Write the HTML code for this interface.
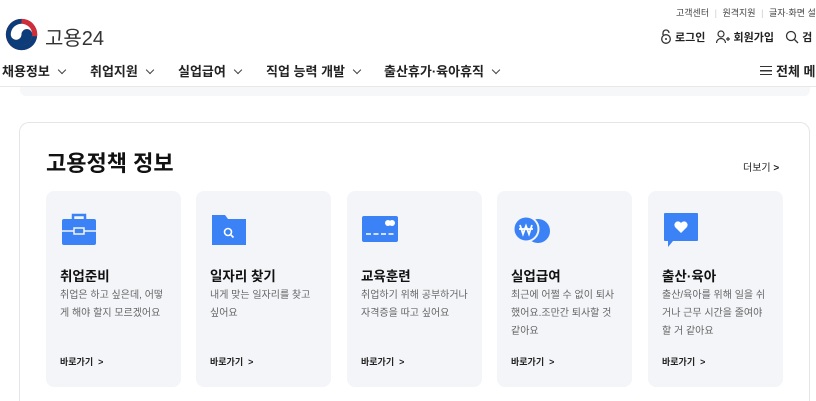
<!DOCTYPE html>
<html><head><meta charset="utf-8"><style>
*{margin:0;padding:0;box-sizing:border-box}
html,body{width:816px;height:401px;overflow:hidden}
body{background:#fff;font-family:"Liberation Sans","Noto Sans CJK KR",sans-serif;color:#222;position:relative}
.a{position:absolute;white-space:nowrap}
.top{font-size:9px;color:#444;top:6px}
.nav{top:61px;font-size:13px;font-weight:700;color:#222}
.chev{display:inline-block;width:6px;height:6px;border-right:1.4px solid #444;border-bottom:1.4px solid #444;transform:rotate(45deg);margin-left:9px;position:relative;top:-3px}
.box{position:absolute;left:19px;top:122px;width:791px;height:279px;border:1px solid #e3e5e8;border-bottom:none;border-radius:10px 10px 0 0}
.card{position:absolute;top:191px;width:135px;height:196px;background:#f3f5f8;border-radius:8px}
.card .ic{position:absolute;left:15px;top:20px}
.card h3{position:absolute;left:14px;top:74px;font-size:13.5px;font-weight:700;color:#111}
.card p{position:absolute;left:14px;top:96px;font-size:10px;line-height:18px;color:#666;width:112px;white-space:normal}
.card .go{position:absolute;left:14px;top:164px;font-size:9px;font-weight:700;color:#222}
</style></head><body>
<svg class="a" style="left:5px;top:18px" width="33" height="33" viewBox="0 0 40 40">
<circle cx="20" cy="20" r="19" fill="#cd2e3a"/>
<path d="M20 1A19 19 0 1 0 39 22L33 22A13 13 0 1 1 20 7Z" fill="#0b3d7a"/>
<path d="M20 7A13 13 0 0 1 33 22L39 22A19 19 0 0 0 20 1Z" fill="#cd2e3a"/>
<path d="M20 7A13 13 0 0 0 7 20A6.5 6.5 0 0 0 20 20A6.5 6.5 0 0 1 33 20A13 13 0 0 0 20 7Z" fill="#fff"/>
<path d="M7 20A13 13 0 0 0 33 20A6.5 6.5 0 0 0 20 20A6.5 6.5 0 0 1 7 20Z" fill="#0b3d7a"/>
<circle cx="20" cy="20" r="19" fill="none" stroke="#fff" stroke-width="0"/>
</svg>
<div class="a" style="left:45px;top:22px;font-size:20px;color:#333">고용24</div>
<div class="a top" style="left:676px">고객센터 <span style="color:#ccc;margin:0 3px">|</span> 원격지원 <span style="color:#ccc;margin:0 3px">|</span> 글자·화면 설정</div>
<div class="a" style="left:660px;top:29px;font-size:11px;font-weight:700;color:#222">
<svg width="12" height="15" viewBox="0 0 12 15" style="vertical-align:-3px"><path d="M3 6V4a3 3 0 0 1 6 0" fill="none" stroke="#333" stroke-width="1.3"/><circle cx="6" cy="10" r="4.3" fill="none" stroke="#333" stroke-width="1.3"/><circle cx="6" cy="10" r="1" fill="#333"/></svg> 로그인
<svg width="14" height="14" viewBox="0 0 14 14" style="vertical-align:-3px;margin-left:8px"><circle cx="5" cy="4" r="3" fill="none" stroke="#333" stroke-width="1.2"/><path d="M0.5 13a4.5 4.5 0 0 1 9 0M10 9h4M12 7v4" fill="none" stroke="#333" stroke-width="1.2"/></svg> 회원가입
<svg width="14" height="14" viewBox="0 0 14 14" style="vertical-align:-3px;margin-left:8px"><circle cx="6" cy="6" r="4.5" fill="none" stroke="#333" stroke-width="1.3"/><path d="M9.5 9.5L13 13" stroke="#333" stroke-width="1.3"/></svg> 검
</div>
<div class="a nav" style="left:2px">채용정보<span class="chev"></span></div>
<div class="a nav" style="left:90px">취업지원<span class="chev"></span></div>
<div class="a nav" style="left:178px">실업급여<span class="chev"></span></div>
<div class="a nav" style="left:266px">직업 능력 개발<span class="chev"></span></div>
<div class="a nav" style="left:384px">출산휴가·육아휴직<span class="chev"></span></div>
<div class="a nav" style="left:760px">
<span style="display:inline-block;width:12px;height:9px;border-top:1.5px solid #333;border-bottom:1.5px solid #333;position:relative;top:-1px;margin-right:4px;background:linear-gradient(#333,#333) center/100% 1.5px no-repeat"></span>전체 메</div>
<div class="a" style="left:0;top:86px;width:816px;height:1px;background:#e8e8e8"></div>
<div class="a" style="left:20px;top:87px;width:790px;height:9px;background:#f6f7f8;border-radius:0 0 6px 6px"></div>
<div class="box"></div>
<div class="a" style="left:46px;top:146px;font-size:22px;font-weight:700;color:#111">고용정책 정보</div>
<div class="a" style="left:743px;top:159px;font-size:10px;color:#222">더보기 <span style="font-weight:700">&gt;</span></div>

<div class="card" style="left:46px"><svg class="ic" width="36" height="36" viewBox="0 0 36 36"><path d="M12 8V4h12v4" fill="none" stroke="#3b82f6" stroke-width="2.5"/><rect x="1" y="8" width="34" height="26" rx="2" fill="#3b82f6"/><path d="M1 20h34" stroke="#f3f5f8" stroke-width="1.5"/><rect x="13" y="17" width="10" height="6" fill="#3b82f6" stroke="#f3f5f8" stroke-width="1.5"/></svg><h3>취업준비</h3><p>취업은 하고 싶은데, 어떻게 해야 할지 모르겠어요</p><div class="go">바로가기 &nbsp;&gt;</div></div>
<div class="card" style="left:196px"><svg class="ic" width="36" height="36" viewBox="0 0 36 36"><path d="M1 4h13l3 4h18v26H1z" fill="#3b82f6"/><circle cx="17" cy="21" r="3.5" fill="none" stroke="#fff" stroke-width="1.6"/><path d="M19.5 23.5l3 3" stroke="#fff" stroke-width="1.6"/></svg><h3>일자리 찾기</h3><p>내게 맞는 일자리를 찾고 싶어요</p><div class="go">바로가기 &nbsp;&gt;</div></div>
<div class="card" style="left:347px"><svg class="ic" width="36" height="36" viewBox="0 0 36 36"><rect x="0" y="5" width="36" height="26" rx="2" fill="#3b82f6"/><circle cx="26" cy="12" r="3" fill="#fff"/><circle cx="30" cy="12" r="3" fill="#fff"/><path d="M4 23h28" stroke="#fff" stroke-width="1.6" stroke-dasharray="5 2.5"/></svg><h3>교육훈련</h3><p>취업하기 위해 공부하거나 자격증을 따고 싶어요</p><div class="go">바로가기 &nbsp;&gt;</div></div>
<div class="card" style="left:497px"><svg class="ic" width="40" height="36" viewBox="0 0 40 36"><circle cx="26" cy="20" r="12" fill="#3b82f6"/><circle cx="14" cy="18" r="12.5" fill="#3b82f6" stroke="#f3f5f8" stroke-width="2"/><path d="M8 14l3 9 3-8 3 8 3-9M7 18h14" fill="none" stroke="#fff" stroke-width="1.8"/></svg><h3>실업급여</h3><p>최근에 어쩔 수 없이 퇴사했어요.조만간 퇴사할 것 같아요</p><div class="go">바로가기 &nbsp;&gt;</div></div>
<div class="card" style="left:648px"><svg class="ic" width="36" height="38" viewBox="0 0 36 38"><path d="M2 2h32a1 1 0 0 1 1 1v26a1 1 0 0 1-1 1H10l-5 6v-6H2a1 1 0 0 1-1-1V3a1 1 0 0 1 1-1z" fill="#3b82f6"/><path d="M18 22l-6-6a3.3 3.3 0 0 1 6-4a3.3 3.3 0 0 1 6 4z" fill="#fff"/></svg><h3>출산·육아</h3><p>출산/육아를 위해 일을 쉬거나 근무 시간을 줄여야 할 거 같아요</p><div class="go">바로가기 &nbsp;&gt;</div></div>
</body></html>
